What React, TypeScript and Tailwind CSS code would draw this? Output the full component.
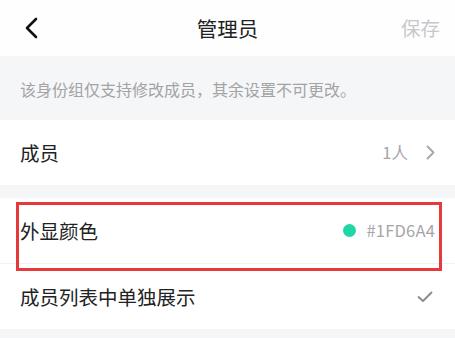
const FONT = '"Noto Sans CJK SC", "Noto Sans", sans-serif';

function Row({ label, right, divider }: { label: string; right: React.ReactNode; divider?: boolean }) {
  return (
    <div className={`bg-white ${divider ? 'border-b border-[#f2f2f4]' : ''}`}>
      <div className="flex h-[65px] items-center justify-between pl-5 pr-[20px]">
        <span className="text-[19.5px] text-[#222]">{label}</span>
        {right}
      </div>
    </div>
  );
}

export default function App() {
  return (
    <div className="relative w-[455px] h-[338px] overflow-hidden bg-[#f5f6f8]" style={{ fontFamily: FONT }}>
      <header className="flex h-[56px] items-center justify-between bg-[#fefefe] pl-[24px] pr-[15px]">
        <svg width="16" height="22" viewBox="0 0 16 22" fill="none">
          <path d="M12 2 L3 11 L12 20" stroke="#111" strokeWidth="2.6" strokeLinecap="round" strokeLinejoin="round" />
        </svg>
        <h1 className="text-[20.5px] text-[#222] ml-[14px]">管理员</h1>
        <span className="text-[19.5px] text-[#c8c8cc]">保存</span>
      </header>

      <div className="flex h-[64px] items-center px-5 pt-[2px]">
        <p className="text-[16px] text-[#a3a3a6]">该身份组仅支持修改成员，其余设置不可更改。</p>
      </div>

      <Row
        label="成员"
        right={
          <div className="flex items-center gap-[18px]">
            <span className="text-[16.5px] text-[#a5a5a8]">1人</span>
            <svg width="9" height="15" viewBox="0 0 9 15" fill="none">
              <path d="M1.5 1.5 L7.5 7.5 L1.5 13.5" stroke="#a5a5a8" strokeWidth="1.8" strokeLinecap="round" strokeLinejoin="round" />
            </svg>
          </div>
        }
      />

      <div className="h-[13px]" />

      <div className="relative">
        <Row
          label="外显颜色"
          divider
          right={
            <div className="flex items-center gap-[10px]">
              <span className="h-[13px] w-[13px] rounded-full bg-[#1FD6A4]" />
              <span className="text-[16.5px] text-[#a5a5a8] tracking-[0.2px]">#1FD6A4</span>
            </div>
          }
        />
        <div className="pointer-events-none absolute left-[16px] top-[4px] h-[69px] w-[426px] border-[3px] border-[#e5393b]" />
      </div>

      <Row
        label="成员列表中单独展示"
        right={
          <svg width="16" height="12" viewBox="0 0 16 12" fill="none" className="mr-[2px]">
            <path d="M1.5 6 L6 10 L14.5 1.5" stroke="#8a8a8e" strokeWidth="1.8" strokeLinecap="round" strokeLinejoin="round" />
          </svg>
        }
      />
    </div>
  );
}
